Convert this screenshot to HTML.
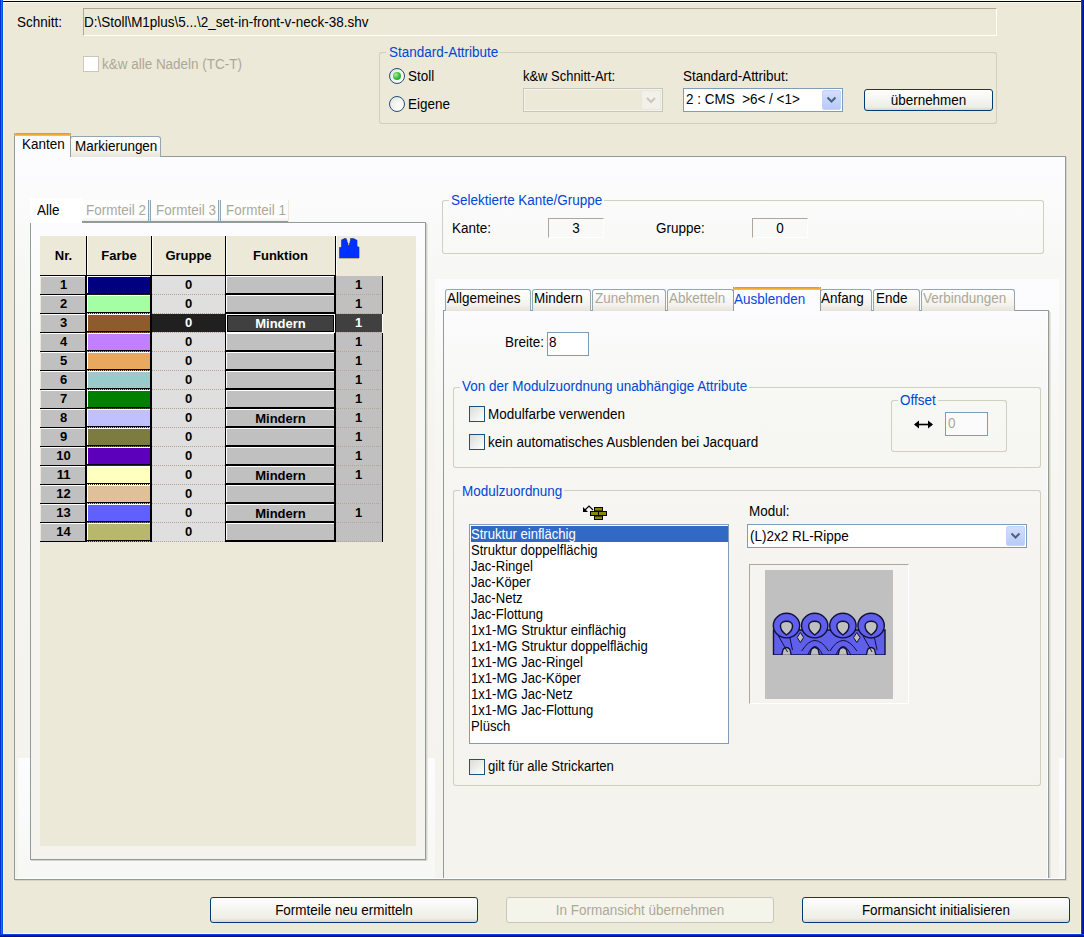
<!DOCTYPE html>
<html><head><meta charset="utf-8"><style>
html,body{margin:0;padding:0;}
body{width:1084px;height:937px;overflow:hidden;position:relative;background:#ece9d8;font-family:'Liberation Sans', sans-serif;font-size:13px;line-height:16px;}
body>div{position:absolute;white-space:pre;}
svg{display:block}
</style></head><body>
<div style="left:0px;top:0px;width:1084px;height:1px;background:#fbfaf0"></div>
<div style="left:0px;top:1px;width:1084px;height:1px;background:#000"></div>
<div style="left:0px;top:2px;width:1084px;height:1px;background:#fdf8e4"></div>
<div style="left:3px;top:2px;width:1px;height:932px;background:#fff6dc"></div>
<div style="left:1080px;top:2px;width:1px;height:932px;background:#fff6dc"></div>
<div style="left:3px;top:933px;width:1078px;height:1px;background:#fff6dc"></div>
<div style="left:0px;top:0px;width:1px;height:937px;background:#0530d0"></div>
<div style="left:1px;top:0px;width:1px;height:937px;background:#1a6ef0"></div>
<div style="left:2px;top:0px;width:1px;height:937px;background:#0050e0"></div>
<div style="left:1081px;top:0px;width:1px;height:937px;background:#0a40e8"></div>
<div style="left:1082px;top:0px;width:1px;height:937px;background:#0020a8"></div>
<div style="left:1083px;top:0px;width:1px;height:937px;background:#001590"></div>
<div style="left:0px;top:934px;width:1084px;height:1px;background:#0a40e8"></div>
<div style="left:0px;top:935px;width:1084px;height:1px;background:#0020a0"></div>
<div style="left:0px;top:936px;width:1084px;height:1px;background:#001088"></div>
<div style="left:17px;top:14px;font-size:14px;color:#000;font-weight:normal;transform:scaleX(0.962);transform-origin:0 0;">Schnitt:</div>
<div style="left:83px;top:8px;width:914px;height:28px;border-top:1px solid #aca899;border-left:1px solid #aca899;border-right:1px solid #fff;border-bottom:1px solid #fff;box-sizing:border-box"></div>
<div style="left:84px;top:14px;font-size:14px;color:#000;font-weight:normal;transform:scaleX(0.962);transform-origin:0 0;">D:\Stoll\M1plus\5...\2_set-in-front-v-neck-38.shv</div>
<div style="left:83px;top:56px;width:16px;height:16px;border:1px solid #cac8bb;background:#fff;box-sizing:border-box"></div>
<div style="left:102px;top:56px;font-size:14px;color:#aca899;font-weight:normal;transform:scaleX(0.962);transform-origin:0 0;">k&amp;w alle Nadeln (TC-T)</div>
<div style="left:379px;top:52px;width:7px;height:4px;border-top:1px solid #d0d0bf;border-left:1px solid #d0d0bf;border-top-left-radius:3px;box-sizing:border-box"></div>
<div style="left:500px;top:52px;width:497px;height:4px;border-top:1px solid #d0d0bf;border-right:1px solid #d0d0bf;border-top-right-radius:3px;box-sizing:border-box"></div>
<div style="left:379px;top:55px;width:618px;height:69px;border-left:1px solid #d0d0bf;border-right:1px solid #d0d0bf;border-bottom:1px solid #d0d0bf;border-bottom-left-radius:3px;border-bottom-right-radius:3px;box-sizing:border-box"></div>
<div style="left:389px;top:44px;font-size:14px;color:#0046d5;font-weight:normal;transform:scaleX(0.962);transform-origin:0 0;">Standard-Attribute</div>
<div style="left:389px;top:68px;width:16px;height:16px;border:1px solid #1c5180;border-radius:50%;box-sizing:border-box;background:radial-gradient(circle at 70% 70%, #fff 0%, #f0efe8 60%, #dcdad0 100%)"></div>
<div style="left:393px;top:72px;width:8px;height:8px;border-radius:50%;background:radial-gradient(circle at 35% 35%, #a6f0a0 0%, #3bbd3b 50%, #1e8f1e 100%)"></div>
<div style="left:408px;top:68px;font-size:14px;color:#000;font-weight:normal;transform:scaleX(0.962);transform-origin:0 0;">Stoll</div>
<div style="left:389px;top:96px;width:16px;height:16px;border:1px solid #1c5180;border-radius:50%;box-sizing:border-box;background:radial-gradient(circle at 70% 70%, #fff 0%, #f0efe8 60%, #dcdad0 100%)"></div>
<div style="left:408px;top:96px;font-size:14px;color:#000;font-weight:normal;transform:scaleX(0.962);transform-origin:0 0;">Eigene</div>
<div style="left:523px;top:68px;font-size:14px;color:#000;font-weight:normal;transform:scaleX(0.925);transform-origin:0 0;">k&amp;w Schnitt-Art:</div>
<div style="left:523px;top:88px;width:140px;height:24px;border:1px solid #c9c7ba;box-sizing:border-box;background:#ece9d8"></div>
<div style="left:524px;top:89px;width:138px;height:22px;border:1px solid #f5f4ea;box-sizing:border-box"></div>
<div style="left:641px;top:90px;width:20px;height:20px;background:#f2f1e9;border:1px solid #e8e6da;box-sizing:border-box;border-radius:2px"></div>
<svg style="position:absolute;left:646px;top:96px" width="10" height="8"><path d="M1 2 L5 6 L9 2" stroke="#c9c7ba" stroke-width="2" fill="none"/></svg>
<div style="left:683px;top:68px;font-size:14px;color:#000;font-weight:normal;transform:scaleX(0.962);transform-origin:0 0;">Standard-Attribut:</div>
<div style="left:683px;top:88px;width:160px;height:24px;border:1px solid #7f9db9;box-sizing:border-box;background:#fff"></div>
<div style="left:822px;top:90px;width:19px;height:20px;background:linear-gradient(#d2defc,#b8cbf6);border:1px solid #c3d3fd;box-sizing:border-box;border-radius:2px"></div>
<svg style="position:absolute;left:826px;top:96px" width="11" height="8"><path d="M1.5 1.5 L5.5 5.5 L9.5 1.5" stroke="#4d6185" stroke-width="2" fill="none"/></svg>
<div style="left:686px;top:91px;font-size:14px;color:#000;font-weight:normal;transform:scaleX(0.962);transform-origin:0 0;">2 : CMS &nbsp;&gt;6&lt; / &lt;1&gt;</div>
<div style="left:864px;top:89px;width:129px;height:22px;border:1px solid #003c74;border-radius:3px;box-sizing:border-box;background:linear-gradient(#ffffff 0%,#f6f6f2 40%,#eeede6 85%,#dcd6c8 100%)"></div>
<div style="left:864.0px;top:92px;width:129px;text-align:center;font-size:14px;color:#000;font-weight:normal;transform:scaleX(0.962);transform-origin:50% 0;">&uuml;bernehmen</div>
<div style="left:14px;top:156px;width:1052px;height:724px;border:1px solid #919b9c;box-sizing:border-box;background:linear-gradient(#fcfcfe 0px,#fbfbfc 40px,#f7f7f4 115px,#f5f4f0 300px,#f4f3ee 600px)"></div>
<div style="left:1066px;top:157px;width:1px;height:723px;background:#d6d3c6"></div>
<div style="left:15px;top:880px;width:1052px;height:1px;background:#d6d3c6"></div>
<div style="left:18px;top:758px;width:418px;height:121px;background:linear-gradient(#fcfcfe 0px,#fbfbfc 40px,#f7f7f4 115px,#f5f4f0 300px,#f4f3ee 600px)"></div>
<div style="left:1059px;top:758px;width:6px;height:121px;background:linear-gradient(#fcfcfe 0px,#fbfbfc 40px,#f7f7f4 115px,#f5f4f0 300px,#f4f3ee 600px)"></div>
<div style="left:70px;top:136px;width:91px;height:21px;border:1px solid #91a7b4;border-bottom:none;border-radius:3px 3px 0 0;box-sizing:border-box;background:linear-gradient(#fff,#f3f2ec 70%,#e6e4d9)"></div>
<div style="left:75px;top:138px;font-size:14px;color:#000;font-weight:normal;transform:scaleX(0.962);transform-origin:0 0;">Markierungen</div>
<div style="left:14px;top:133px;width:57px;height:24px;border-left:1px solid #919b9c;border-right:1px solid #919b9c;box-sizing:border-box;background:#fcfcfe"></div>
<div style="left:14px;top:133px;width:57px;height:3px;background:linear-gradient(#e68b2c,#ffc73c);border-radius:3px 3px 0 0"></div>
<div style="left:22px;top:136px;font-size:14px;color:#000;font-weight:normal;transform:scaleX(0.962);transform-origin:0 0;">Kanten</div>
<div style="left:30px;top:222px;width:396px;height:638px;border:1px solid #919b9c;box-sizing:border-box;background:linear-gradient(#fcfcfe 0px,#fbfbfc 40px,#f7f7f4 115px,#f5f4f0 300px,#f4f3ee 600px)"></div>
<div style="left:426px;top:223px;width:1px;height:637px;background:#d8d5c8"></div>
<div style="left:427px;top:224px;width:1px;height:636px;background:#e8e5da"></div>
<div style="left:31px;top:860px;width:396px;height:1px;background:#d6d3c6"></div>
<div style="left:30px;top:198px;width:52px;height:25px;background:#fff"></div>
<div style="left:37px;top:202px;font-size:14px;color:#000;font-weight:normal;transform:scaleX(0.962);transform-origin:0 0;">Alle</div>
<div style="left:82px;top:200px;width:207px;height:22px;background:linear-gradient(#fefefe 85%,#f0eee4);border-bottom:1px solid #919b9c;box-sizing:border-box"></div>
<div style="left:148px;top:200px;width:1px;height:21px;background:#8fa6b8"></div>
<div style="left:149px;top:200px;width:1px;height:21px;background:#f0ecd8"></div>
<div style="left:150px;top:200px;width:1px;height:21px;background:#8fa6b8"></div>
<div style="left:218px;top:200px;width:1px;height:21px;background:#8fa6b8"></div>
<div style="left:219px;top:200px;width:1px;height:21px;background:#f0ecd8"></div>
<div style="left:220px;top:200px;width:1px;height:21px;background:#8fa6b8"></div>
<div style="left:86px;top:202px;font-size:14px;color:#aca899;font-weight:normal;transform:scaleX(0.962);transform-origin:0 0;">Formteil 2</div>
<div style="left:156px;top:202px;font-size:14px;color:#aca899;font-weight:normal;transform:scaleX(0.962);transform-origin:0 0;">Formteil 3</div>
<div style="left:226px;top:202px;font-size:14px;color:#aca899;font-weight:normal;transform:scaleX(0.962);transform-origin:0 0;">Formteil 1</div>
<div style="left:288px;top:200px;width:1px;height:22px;background:#ece9d8"></div>
<div style="left:40px;top:236px;width:376px;height:610px;background:#ece9d8"></div>
<div style="left:86px;top:236px;width:1px;height:39px;background:#000"></div>
<div style="left:87px;top:236px;width:1px;height:39px;background:#fff"></div>
<div style="left:151px;top:236px;width:1px;height:39px;background:#000"></div>
<div style="left:152px;top:236px;width:1px;height:39px;background:#fff"></div>
<div style="left:225px;top:236px;width:1px;height:39px;background:#000"></div>
<div style="left:226px;top:236px;width:1px;height:39px;background:#fff"></div>
<div style="left:335px;top:236px;width:1px;height:39px;background:#000"></div>
<div style="left:336px;top:236px;width:1px;height:39px;background:#fff"></div>
<div style="left:40px;top:275px;width:296px;height:1px;background:#000"></div>
<div style="left:41.5px;top:248px;width:44px;text-align:center;font-size:13px;color:#000;font-weight:bold;transform-origin:50% 0;">Nr.</div>
<div style="left:89.0px;top:248px;width:60px;text-align:center;font-size:13px;color:#000;font-weight:bold;transform-origin:50% 0;">Farbe</div>
<div style="left:153.5px;top:248px;width:70px;text-align:center;font-size:13px;color:#000;font-weight:bold;transform-origin:50% 0;">Gruppe</div>
<div style="left:230.5px;top:248px;width:100px;text-align:center;font-size:13px;color:#000;font-weight:bold;transform-origin:50% 0;">Funktion</div>
<svg style="position:absolute;left:334px;top:234px" width="30" height="28" viewBox="334 234 30 28"><path d="M339 247 L341 247 L341 240 L343 239 L344 238 L346 238 L347 240 L348 243 L348 245 L349 245 L350 241 L350 238 L353 238 L355 239 L357 240 L357 246 L359 247 L359 258 L339 258 Z" fill="#0030ff" stroke="#8a7a50" stroke-width="0.5" shape-rendering="crispEdges"/></svg>
<div style="left:41px;top:276px;width:44px;height:1px;background:#fff"></div>
<div style="left:41px;top:277px;width:44px;height:17px;background:#c0c0c0"></div>
<div style="left:40px;top:294px;width:47px;height:1px;background:#000"></div>
<div style="left:85px;top:276px;width:2px;height:19px;background:#000"></div>
<div style="left:41.5px;top:277px;width:44px;text-align:center;font-size:13px;color:#000;font-weight:bold;transform-origin:50% 0;">1</div>
<div style="left:87px;top:276px;width:63px;height:18px;background:#fff"></div>
<div style="left:88px;top:277px;width:62px;height:16px;background:#000080"></div>
<div style="left:87px;top:293px;width:63px;height:1px;background:#000"></div>
<div style="left:87px;top:294px;width:63px;height:1px;background:repeating-linear-gradient(90deg,#000080 0 1px,#2a2010 1px 2px)"></div>
<div style="left:150px;top:276px;width:2px;height:19px;background:#000"></div>
<div style="left:152px;top:276px;width:73px;height:18px;background:#dfdfdf"></div>
<div style="left:152px;top:294px;width:73px;height:1px;background:repeating-linear-gradient(90deg,#b0a890 0 1px,#dfdfdf 1px 2px)"></div>
<div style="left:153.5px;top:277px;width:70px;text-align:center;font-size:13px;color:#000;font-weight:bold;transform-origin:50% 0;">0</div>
<div style="left:225px;top:276px;width:1px;height:19px;background:#000"></div>
<div style="left:226px;top:276px;width:109px;height:19px;background:#000"></div>
<div style="left:226px;top:276px;width:108px;height:17px;background:#fff"></div>
<div style="left:227px;top:277px;width:107px;height:16px;background:#c0c0c0"></div>
<div style="left:336px;top:276px;width:46px;height:18px;background:#c0c0c0"></div>
<div style="left:336px;top:294px;width:46px;height:1px;background:repeating-linear-gradient(90deg,#b0a890 0 1px,#c0c0c0 1px 2px)"></div>
<div style="left:338.5px;top:277px;width:40px;text-align:center;font-size:13px;color:#000;font-weight:bold;transform-origin:50% 0;">1</div>
<div style="left:41px;top:295px;width:44px;height:1px;background:#fff"></div>
<div style="left:41px;top:296px;width:44px;height:17px;background:#c0c0c0"></div>
<div style="left:40px;top:313px;width:47px;height:1px;background:#000"></div>
<div style="left:85px;top:295px;width:2px;height:19px;background:#000"></div>
<div style="left:41.5px;top:296px;width:44px;text-align:center;font-size:13px;color:#000;font-weight:bold;transform-origin:50% 0;">2</div>
<div style="left:87px;top:295px;width:63px;height:18px;background:#fff"></div>
<div style="left:88px;top:296px;width:62px;height:16px;background:#a4ffa4"></div>
<div style="left:87px;top:312px;width:63px;height:1px;background:#000"></div>
<div style="left:87px;top:313px;width:63px;height:1px;background:repeating-linear-gradient(90deg,#a4ffa4 0 1px,#2a2010 1px 2px)"></div>
<div style="left:150px;top:295px;width:2px;height:19px;background:#000"></div>
<div style="left:152px;top:295px;width:73px;height:18px;background:#dfdfdf"></div>
<div style="left:152px;top:313px;width:73px;height:1px;background:repeating-linear-gradient(90deg,#b0a890 0 1px,#dfdfdf 1px 2px)"></div>
<div style="left:153.5px;top:296px;width:70px;text-align:center;font-size:13px;color:#000;font-weight:bold;transform-origin:50% 0;">0</div>
<div style="left:225px;top:295px;width:1px;height:19px;background:#000"></div>
<div style="left:226px;top:295px;width:109px;height:19px;background:#000"></div>
<div style="left:226px;top:295px;width:108px;height:17px;background:#fff"></div>
<div style="left:227px;top:296px;width:107px;height:16px;background:#c0c0c0"></div>
<div style="left:336px;top:295px;width:46px;height:18px;background:#c0c0c0"></div>
<div style="left:336px;top:313px;width:46px;height:1px;background:repeating-linear-gradient(90deg,#b0a890 0 1px,#c0c0c0 1px 2px)"></div>
<div style="left:338.5px;top:296px;width:40px;text-align:center;font-size:13px;color:#000;font-weight:bold;transform-origin:50% 0;">1</div>
<div style="left:41px;top:314px;width:44px;height:1px;background:#fff"></div>
<div style="left:41px;top:315px;width:44px;height:17px;background:#c0c0c0"></div>
<div style="left:40px;top:332px;width:47px;height:1px;background:#000"></div>
<div style="left:85px;top:314px;width:2px;height:19px;background:#000"></div>
<div style="left:41.5px;top:315px;width:44px;text-align:center;font-size:13px;color:#000;font-weight:bold;transform-origin:50% 0;">3</div>
<div style="left:87px;top:314px;width:63px;height:18px;background:#fff"></div>
<div style="left:88px;top:315px;width:62px;height:16px;background:#8c5c2c"></div>
<div style="left:87px;top:331px;width:63px;height:1px;background:#000"></div>
<div style="left:87px;top:332px;width:63px;height:1px;background:repeating-linear-gradient(90deg,#8c5c2c 0 1px,#2a2010 1px 2px)"></div>
<div style="left:150px;top:314px;width:2px;height:19px;background:#000"></div>
<div style="left:152px;top:314px;width:73px;height:18px;background:#202020"></div>
<div style="left:152px;top:332px;width:73px;height:1px;background:repeating-linear-gradient(90deg,#b0a890 0 1px,#dfdfdf 1px 2px)"></div>
<div style="left:153.5px;top:315px;width:70px;text-align:center;font-size:13px;color:#fff;font-weight:bold;transform-origin:50% 0;">0</div>
<div style="left:225px;top:314px;width:1px;height:19px;background:#000"></div>
<div style="left:226px;top:314px;width:109px;height:19px;background:#fff"></div>
<div style="left:227px;top:315px;width:107px;height:17px;background:#000"></div>
<div style="left:228px;top:316px;width:105px;height:15px;background:#404040"></div>
<div style="left:230.5px;top:316px;width:100px;text-align:center;font-size:13px;color:#fff;font-weight:bold;transform-origin:50% 0;">Mindern</div>
<div style="left:336px;top:314px;width:46px;height:18px;background:#404040"></div>
<div style="left:336px;top:332px;width:46px;height:1px;background:repeating-linear-gradient(90deg,#b0a890 0 1px,#c0c0c0 1px 2px)"></div>
<div style="left:338.5px;top:315px;width:40px;text-align:center;font-size:13px;color:#fff;font-weight:bold;transform-origin:50% 0;">1</div>
<div style="left:41px;top:333px;width:44px;height:1px;background:#fff"></div>
<div style="left:41px;top:334px;width:44px;height:17px;background:#c0c0c0"></div>
<div style="left:40px;top:351px;width:47px;height:1px;background:#000"></div>
<div style="left:85px;top:333px;width:2px;height:19px;background:#000"></div>
<div style="left:41.5px;top:334px;width:44px;text-align:center;font-size:13px;color:#000;font-weight:bold;transform-origin:50% 0;">4</div>
<div style="left:87px;top:333px;width:63px;height:18px;background:#fff"></div>
<div style="left:88px;top:334px;width:62px;height:16px;background:#c080ff"></div>
<div style="left:87px;top:350px;width:63px;height:1px;background:#000"></div>
<div style="left:87px;top:351px;width:63px;height:1px;background:repeating-linear-gradient(90deg,#c080ff 0 1px,#2a2010 1px 2px)"></div>
<div style="left:150px;top:333px;width:2px;height:19px;background:#000"></div>
<div style="left:152px;top:333px;width:73px;height:18px;background:#dfdfdf"></div>
<div style="left:152px;top:351px;width:73px;height:1px;background:repeating-linear-gradient(90deg,#b0a890 0 1px,#dfdfdf 1px 2px)"></div>
<div style="left:153.5px;top:334px;width:70px;text-align:center;font-size:13px;color:#000;font-weight:bold;transform-origin:50% 0;">0</div>
<div style="left:225px;top:333px;width:1px;height:19px;background:#000"></div>
<div style="left:226px;top:333px;width:109px;height:19px;background:#000"></div>
<div style="left:226px;top:333px;width:108px;height:17px;background:#fff"></div>
<div style="left:227px;top:334px;width:107px;height:16px;background:#c0c0c0"></div>
<div style="left:336px;top:333px;width:46px;height:18px;background:#c0c0c0"></div>
<div style="left:336px;top:351px;width:46px;height:1px;background:repeating-linear-gradient(90deg,#b0a890 0 1px,#c0c0c0 1px 2px)"></div>
<div style="left:338.5px;top:334px;width:40px;text-align:center;font-size:13px;color:#000;font-weight:bold;transform-origin:50% 0;">1</div>
<div style="left:41px;top:352px;width:44px;height:1px;background:#fff"></div>
<div style="left:41px;top:353px;width:44px;height:17px;background:#c0c0c0"></div>
<div style="left:40px;top:370px;width:47px;height:1px;background:#000"></div>
<div style="left:85px;top:352px;width:2px;height:19px;background:#000"></div>
<div style="left:41.5px;top:353px;width:44px;text-align:center;font-size:13px;color:#000;font-weight:bold;transform-origin:50% 0;">5</div>
<div style="left:87px;top:352px;width:63px;height:18px;background:#fff"></div>
<div style="left:88px;top:353px;width:62px;height:16px;background:#e8a860"></div>
<div style="left:87px;top:369px;width:63px;height:1px;background:#000"></div>
<div style="left:87px;top:370px;width:63px;height:1px;background:repeating-linear-gradient(90deg,#e8a860 0 1px,#2a2010 1px 2px)"></div>
<div style="left:150px;top:352px;width:2px;height:19px;background:#000"></div>
<div style="left:152px;top:352px;width:73px;height:18px;background:#dfdfdf"></div>
<div style="left:152px;top:370px;width:73px;height:1px;background:repeating-linear-gradient(90deg,#b0a890 0 1px,#dfdfdf 1px 2px)"></div>
<div style="left:153.5px;top:353px;width:70px;text-align:center;font-size:13px;color:#000;font-weight:bold;transform-origin:50% 0;">0</div>
<div style="left:225px;top:352px;width:1px;height:19px;background:#000"></div>
<div style="left:226px;top:352px;width:109px;height:19px;background:#000"></div>
<div style="left:226px;top:352px;width:108px;height:17px;background:#fff"></div>
<div style="left:227px;top:353px;width:107px;height:16px;background:#c0c0c0"></div>
<div style="left:336px;top:352px;width:46px;height:18px;background:#c0c0c0"></div>
<div style="left:336px;top:370px;width:46px;height:1px;background:repeating-linear-gradient(90deg,#b0a890 0 1px,#c0c0c0 1px 2px)"></div>
<div style="left:338.5px;top:353px;width:40px;text-align:center;font-size:13px;color:#000;font-weight:bold;transform-origin:50% 0;">1</div>
<div style="left:41px;top:371px;width:44px;height:1px;background:#fff"></div>
<div style="left:41px;top:372px;width:44px;height:17px;background:#c0c0c0"></div>
<div style="left:40px;top:389px;width:47px;height:1px;background:#000"></div>
<div style="left:85px;top:371px;width:2px;height:19px;background:#000"></div>
<div style="left:41.5px;top:372px;width:44px;text-align:center;font-size:13px;color:#000;font-weight:bold;transform-origin:50% 0;">6</div>
<div style="left:87px;top:371px;width:63px;height:18px;background:#fff"></div>
<div style="left:88px;top:372px;width:62px;height:16px;background:#98cccc"></div>
<div style="left:87px;top:388px;width:63px;height:1px;background:#000"></div>
<div style="left:87px;top:389px;width:63px;height:1px;background:repeating-linear-gradient(90deg,#98cccc 0 1px,#2a2010 1px 2px)"></div>
<div style="left:150px;top:371px;width:2px;height:19px;background:#000"></div>
<div style="left:152px;top:371px;width:73px;height:18px;background:#dfdfdf"></div>
<div style="left:152px;top:389px;width:73px;height:1px;background:repeating-linear-gradient(90deg,#b0a890 0 1px,#dfdfdf 1px 2px)"></div>
<div style="left:153.5px;top:372px;width:70px;text-align:center;font-size:13px;color:#000;font-weight:bold;transform-origin:50% 0;">0</div>
<div style="left:225px;top:371px;width:1px;height:19px;background:#000"></div>
<div style="left:226px;top:371px;width:109px;height:19px;background:#000"></div>
<div style="left:226px;top:371px;width:108px;height:17px;background:#fff"></div>
<div style="left:227px;top:372px;width:107px;height:16px;background:#c0c0c0"></div>
<div style="left:336px;top:371px;width:46px;height:18px;background:#c0c0c0"></div>
<div style="left:336px;top:389px;width:46px;height:1px;background:repeating-linear-gradient(90deg,#b0a890 0 1px,#c0c0c0 1px 2px)"></div>
<div style="left:338.5px;top:372px;width:40px;text-align:center;font-size:13px;color:#000;font-weight:bold;transform-origin:50% 0;">1</div>
<div style="left:41px;top:390px;width:44px;height:1px;background:#fff"></div>
<div style="left:41px;top:391px;width:44px;height:17px;background:#c0c0c0"></div>
<div style="left:40px;top:408px;width:47px;height:1px;background:#000"></div>
<div style="left:85px;top:390px;width:2px;height:19px;background:#000"></div>
<div style="left:41.5px;top:391px;width:44px;text-align:center;font-size:13px;color:#000;font-weight:bold;transform-origin:50% 0;">7</div>
<div style="left:87px;top:390px;width:63px;height:18px;background:#fff"></div>
<div style="left:88px;top:391px;width:62px;height:16px;background:#008000"></div>
<div style="left:87px;top:407px;width:63px;height:1px;background:#000"></div>
<div style="left:87px;top:408px;width:63px;height:1px;background:repeating-linear-gradient(90deg,#008000 0 1px,#2a2010 1px 2px)"></div>
<div style="left:150px;top:390px;width:2px;height:19px;background:#000"></div>
<div style="left:152px;top:390px;width:73px;height:18px;background:#dfdfdf"></div>
<div style="left:152px;top:408px;width:73px;height:1px;background:repeating-linear-gradient(90deg,#b0a890 0 1px,#dfdfdf 1px 2px)"></div>
<div style="left:153.5px;top:391px;width:70px;text-align:center;font-size:13px;color:#000;font-weight:bold;transform-origin:50% 0;">0</div>
<div style="left:225px;top:390px;width:1px;height:19px;background:#000"></div>
<div style="left:226px;top:390px;width:109px;height:19px;background:#000"></div>
<div style="left:226px;top:390px;width:108px;height:17px;background:#fff"></div>
<div style="left:227px;top:391px;width:107px;height:16px;background:#c0c0c0"></div>
<div style="left:336px;top:390px;width:46px;height:18px;background:#c0c0c0"></div>
<div style="left:336px;top:408px;width:46px;height:1px;background:repeating-linear-gradient(90deg,#b0a890 0 1px,#c0c0c0 1px 2px)"></div>
<div style="left:338.5px;top:391px;width:40px;text-align:center;font-size:13px;color:#000;font-weight:bold;transform-origin:50% 0;">1</div>
<div style="left:41px;top:409px;width:44px;height:1px;background:#fff"></div>
<div style="left:41px;top:410px;width:44px;height:17px;background:#c0c0c0"></div>
<div style="left:40px;top:427px;width:47px;height:1px;background:#000"></div>
<div style="left:85px;top:409px;width:2px;height:19px;background:#000"></div>
<div style="left:41.5px;top:410px;width:44px;text-align:center;font-size:13px;color:#000;font-weight:bold;transform-origin:50% 0;">8</div>
<div style="left:87px;top:409px;width:63px;height:18px;background:#fff"></div>
<div style="left:88px;top:410px;width:62px;height:16px;background:#c0c0ff"></div>
<div style="left:87px;top:426px;width:63px;height:1px;background:#000"></div>
<div style="left:87px;top:427px;width:63px;height:1px;background:repeating-linear-gradient(90deg,#c0c0ff 0 1px,#2a2010 1px 2px)"></div>
<div style="left:150px;top:409px;width:2px;height:19px;background:#000"></div>
<div style="left:152px;top:409px;width:73px;height:18px;background:#dfdfdf"></div>
<div style="left:152px;top:427px;width:73px;height:1px;background:repeating-linear-gradient(90deg,#b0a890 0 1px,#dfdfdf 1px 2px)"></div>
<div style="left:153.5px;top:410px;width:70px;text-align:center;font-size:13px;color:#000;font-weight:bold;transform-origin:50% 0;">0</div>
<div style="left:225px;top:409px;width:1px;height:19px;background:#000"></div>
<div style="left:226px;top:409px;width:109px;height:19px;background:#000"></div>
<div style="left:226px;top:409px;width:108px;height:17px;background:#fff"></div>
<div style="left:227px;top:410px;width:107px;height:16px;background:#c0c0c0"></div>
<div style="left:230.5px;top:411px;width:100px;text-align:center;font-size:13px;color:#000;font-weight:bold;transform-origin:50% 0;">Mindern</div>
<div style="left:336px;top:409px;width:46px;height:18px;background:#c0c0c0"></div>
<div style="left:336px;top:427px;width:46px;height:1px;background:repeating-linear-gradient(90deg,#b0a890 0 1px,#c0c0c0 1px 2px)"></div>
<div style="left:338.5px;top:410px;width:40px;text-align:center;font-size:13px;color:#000;font-weight:bold;transform-origin:50% 0;">1</div>
<div style="left:41px;top:428px;width:44px;height:1px;background:#fff"></div>
<div style="left:41px;top:429px;width:44px;height:17px;background:#c0c0c0"></div>
<div style="left:40px;top:446px;width:47px;height:1px;background:#000"></div>
<div style="left:85px;top:428px;width:2px;height:19px;background:#000"></div>
<div style="left:41.5px;top:429px;width:44px;text-align:center;font-size:13px;color:#000;font-weight:bold;transform-origin:50% 0;">9</div>
<div style="left:87px;top:428px;width:63px;height:18px;background:#fff"></div>
<div style="left:88px;top:429px;width:62px;height:16px;background:#7c7c40"></div>
<div style="left:87px;top:445px;width:63px;height:1px;background:#000"></div>
<div style="left:87px;top:446px;width:63px;height:1px;background:repeating-linear-gradient(90deg,#7c7c40 0 1px,#2a2010 1px 2px)"></div>
<div style="left:150px;top:428px;width:2px;height:19px;background:#000"></div>
<div style="left:152px;top:428px;width:73px;height:18px;background:#dfdfdf"></div>
<div style="left:152px;top:446px;width:73px;height:1px;background:repeating-linear-gradient(90deg,#b0a890 0 1px,#dfdfdf 1px 2px)"></div>
<div style="left:153.5px;top:429px;width:70px;text-align:center;font-size:13px;color:#000;font-weight:bold;transform-origin:50% 0;">0</div>
<div style="left:225px;top:428px;width:1px;height:19px;background:#000"></div>
<div style="left:226px;top:428px;width:109px;height:19px;background:#000"></div>
<div style="left:226px;top:428px;width:108px;height:17px;background:#fff"></div>
<div style="left:227px;top:429px;width:107px;height:16px;background:#c0c0c0"></div>
<div style="left:336px;top:428px;width:46px;height:18px;background:#c0c0c0"></div>
<div style="left:336px;top:446px;width:46px;height:1px;background:repeating-linear-gradient(90deg,#b0a890 0 1px,#c0c0c0 1px 2px)"></div>
<div style="left:338.5px;top:429px;width:40px;text-align:center;font-size:13px;color:#000;font-weight:bold;transform-origin:50% 0;">1</div>
<div style="left:41px;top:447px;width:44px;height:1px;background:#fff"></div>
<div style="left:41px;top:448px;width:44px;height:17px;background:#c0c0c0"></div>
<div style="left:40px;top:465px;width:47px;height:1px;background:#000"></div>
<div style="left:85px;top:447px;width:2px;height:19px;background:#000"></div>
<div style="left:41.5px;top:448px;width:44px;text-align:center;font-size:13px;color:#000;font-weight:bold;transform-origin:50% 0;">10</div>
<div style="left:87px;top:447px;width:63px;height:18px;background:#fff"></div>
<div style="left:88px;top:448px;width:62px;height:16px;background:#5c00bc"></div>
<div style="left:87px;top:464px;width:63px;height:1px;background:#000"></div>
<div style="left:87px;top:465px;width:63px;height:1px;background:repeating-linear-gradient(90deg,#5c00bc 0 1px,#2a2010 1px 2px)"></div>
<div style="left:150px;top:447px;width:2px;height:19px;background:#000"></div>
<div style="left:152px;top:447px;width:73px;height:18px;background:#dfdfdf"></div>
<div style="left:152px;top:465px;width:73px;height:1px;background:repeating-linear-gradient(90deg,#b0a890 0 1px,#dfdfdf 1px 2px)"></div>
<div style="left:153.5px;top:448px;width:70px;text-align:center;font-size:13px;color:#000;font-weight:bold;transform-origin:50% 0;">0</div>
<div style="left:225px;top:447px;width:1px;height:19px;background:#000"></div>
<div style="left:226px;top:447px;width:109px;height:19px;background:#000"></div>
<div style="left:226px;top:447px;width:108px;height:17px;background:#fff"></div>
<div style="left:227px;top:448px;width:107px;height:16px;background:#c0c0c0"></div>
<div style="left:336px;top:447px;width:46px;height:18px;background:#c0c0c0"></div>
<div style="left:336px;top:465px;width:46px;height:1px;background:repeating-linear-gradient(90deg,#b0a890 0 1px,#c0c0c0 1px 2px)"></div>
<div style="left:338.5px;top:448px;width:40px;text-align:center;font-size:13px;color:#000;font-weight:bold;transform-origin:50% 0;">1</div>
<div style="left:41px;top:466px;width:44px;height:1px;background:#fff"></div>
<div style="left:41px;top:467px;width:44px;height:17px;background:#c0c0c0"></div>
<div style="left:40px;top:484px;width:47px;height:1px;background:#000"></div>
<div style="left:85px;top:466px;width:2px;height:19px;background:#000"></div>
<div style="left:41.5px;top:467px;width:44px;text-align:center;font-size:13px;color:#000;font-weight:bold;transform-origin:50% 0;">11</div>
<div style="left:87px;top:466px;width:63px;height:18px;background:#fff"></div>
<div style="left:88px;top:467px;width:62px;height:16px;background:#ffffc0"></div>
<div style="left:87px;top:483px;width:63px;height:1px;background:#000"></div>
<div style="left:87px;top:484px;width:63px;height:1px;background:repeating-linear-gradient(90deg,#ffffc0 0 1px,#2a2010 1px 2px)"></div>
<div style="left:150px;top:466px;width:2px;height:19px;background:#000"></div>
<div style="left:152px;top:466px;width:73px;height:18px;background:#dfdfdf"></div>
<div style="left:152px;top:484px;width:73px;height:1px;background:repeating-linear-gradient(90deg,#b0a890 0 1px,#dfdfdf 1px 2px)"></div>
<div style="left:153.5px;top:467px;width:70px;text-align:center;font-size:13px;color:#000;font-weight:bold;transform-origin:50% 0;">0</div>
<div style="left:225px;top:466px;width:1px;height:19px;background:#000"></div>
<div style="left:226px;top:466px;width:109px;height:19px;background:#000"></div>
<div style="left:226px;top:466px;width:108px;height:17px;background:#fff"></div>
<div style="left:227px;top:467px;width:107px;height:16px;background:#c0c0c0"></div>
<div style="left:230.5px;top:468px;width:100px;text-align:center;font-size:13px;color:#000;font-weight:bold;transform-origin:50% 0;">Mindern</div>
<div style="left:336px;top:466px;width:46px;height:18px;background:#c0c0c0"></div>
<div style="left:336px;top:484px;width:46px;height:1px;background:repeating-linear-gradient(90deg,#b0a890 0 1px,#c0c0c0 1px 2px)"></div>
<div style="left:338.5px;top:467px;width:40px;text-align:center;font-size:13px;color:#000;font-weight:bold;transform-origin:50% 0;">1</div>
<div style="left:41px;top:485px;width:44px;height:1px;background:#fff"></div>
<div style="left:41px;top:486px;width:44px;height:17px;background:#c0c0c0"></div>
<div style="left:40px;top:503px;width:47px;height:1px;background:#000"></div>
<div style="left:85px;top:485px;width:2px;height:19px;background:#000"></div>
<div style="left:41.5px;top:486px;width:44px;text-align:center;font-size:13px;color:#000;font-weight:bold;transform-origin:50% 0;">12</div>
<div style="left:87px;top:485px;width:63px;height:18px;background:#fff"></div>
<div style="left:88px;top:486px;width:62px;height:16px;background:#e0c098"></div>
<div style="left:87px;top:502px;width:63px;height:1px;background:#000"></div>
<div style="left:87px;top:503px;width:63px;height:1px;background:repeating-linear-gradient(90deg,#e0c098 0 1px,#2a2010 1px 2px)"></div>
<div style="left:150px;top:485px;width:2px;height:19px;background:#000"></div>
<div style="left:152px;top:485px;width:73px;height:18px;background:#dfdfdf"></div>
<div style="left:152px;top:503px;width:73px;height:1px;background:repeating-linear-gradient(90deg,#b0a890 0 1px,#dfdfdf 1px 2px)"></div>
<div style="left:153.5px;top:486px;width:70px;text-align:center;font-size:13px;color:#000;font-weight:bold;transform-origin:50% 0;">0</div>
<div style="left:225px;top:485px;width:1px;height:19px;background:#000"></div>
<div style="left:226px;top:485px;width:109px;height:19px;background:#000"></div>
<div style="left:226px;top:485px;width:108px;height:17px;background:#fff"></div>
<div style="left:227px;top:486px;width:107px;height:16px;background:#c0c0c0"></div>
<div style="left:336px;top:485px;width:46px;height:18px;background:#c0c0c0"></div>
<div style="left:336px;top:503px;width:46px;height:1px;background:repeating-linear-gradient(90deg,#b0a890 0 1px,#c0c0c0 1px 2px)"></div>
<div style="left:41px;top:504px;width:44px;height:1px;background:#fff"></div>
<div style="left:41px;top:505px;width:44px;height:17px;background:#c0c0c0"></div>
<div style="left:40px;top:522px;width:47px;height:1px;background:#000"></div>
<div style="left:85px;top:504px;width:2px;height:19px;background:#000"></div>
<div style="left:41.5px;top:505px;width:44px;text-align:center;font-size:13px;color:#000;font-weight:bold;transform-origin:50% 0;">13</div>
<div style="left:87px;top:504px;width:63px;height:18px;background:#fff"></div>
<div style="left:88px;top:505px;width:62px;height:16px;background:#6060ff"></div>
<div style="left:87px;top:521px;width:63px;height:1px;background:#000"></div>
<div style="left:87px;top:522px;width:63px;height:1px;background:repeating-linear-gradient(90deg,#6060ff 0 1px,#2a2010 1px 2px)"></div>
<div style="left:150px;top:504px;width:2px;height:19px;background:#000"></div>
<div style="left:152px;top:504px;width:73px;height:18px;background:#dfdfdf"></div>
<div style="left:152px;top:522px;width:73px;height:1px;background:repeating-linear-gradient(90deg,#b0a890 0 1px,#dfdfdf 1px 2px)"></div>
<div style="left:153.5px;top:505px;width:70px;text-align:center;font-size:13px;color:#000;font-weight:bold;transform-origin:50% 0;">0</div>
<div style="left:225px;top:504px;width:1px;height:19px;background:#000"></div>
<div style="left:226px;top:504px;width:109px;height:19px;background:#000"></div>
<div style="left:226px;top:504px;width:108px;height:17px;background:#fff"></div>
<div style="left:227px;top:505px;width:107px;height:16px;background:#c0c0c0"></div>
<div style="left:230.5px;top:506px;width:100px;text-align:center;font-size:13px;color:#000;font-weight:bold;transform-origin:50% 0;">Mindern</div>
<div style="left:336px;top:504px;width:46px;height:18px;background:#c0c0c0"></div>
<div style="left:336px;top:522px;width:46px;height:1px;background:repeating-linear-gradient(90deg,#b0a890 0 1px,#c0c0c0 1px 2px)"></div>
<div style="left:338.5px;top:505px;width:40px;text-align:center;font-size:13px;color:#000;font-weight:bold;transform-origin:50% 0;">1</div>
<div style="left:41px;top:523px;width:44px;height:1px;background:#fff"></div>
<div style="left:41px;top:524px;width:44px;height:17px;background:#c0c0c0"></div>
<div style="left:40px;top:541px;width:47px;height:1px;background:#000"></div>
<div style="left:85px;top:523px;width:2px;height:19px;background:#000"></div>
<div style="left:41.5px;top:524px;width:44px;text-align:center;font-size:13px;color:#000;font-weight:bold;transform-origin:50% 0;">14</div>
<div style="left:87px;top:523px;width:63px;height:18px;background:#fff"></div>
<div style="left:88px;top:524px;width:62px;height:16px;background:#b8b86c"></div>
<div style="left:87px;top:540px;width:63px;height:1px;background:#000"></div>
<div style="left:87px;top:541px;width:63px;height:1px;background:repeating-linear-gradient(90deg,#b8b86c 0 1px,#2a2010 1px 2px)"></div>
<div style="left:150px;top:523px;width:2px;height:19px;background:#000"></div>
<div style="left:152px;top:523px;width:73px;height:18px;background:#dfdfdf"></div>
<div style="left:152px;top:541px;width:73px;height:1px;background:repeating-linear-gradient(90deg,#b0a890 0 1px,#dfdfdf 1px 2px)"></div>
<div style="left:153.5px;top:524px;width:70px;text-align:center;font-size:13px;color:#000;font-weight:bold;transform-origin:50% 0;">0</div>
<div style="left:225px;top:523px;width:1px;height:19px;background:#000"></div>
<div style="left:226px;top:523px;width:109px;height:19px;background:#000"></div>
<div style="left:226px;top:523px;width:108px;height:17px;background:#fff"></div>
<div style="left:227px;top:524px;width:107px;height:16px;background:#c0c0c0"></div>
<div style="left:336px;top:523px;width:46px;height:18px;background:#c0c0c0"></div>
<div style="left:336px;top:541px;width:46px;height:1px;background:repeating-linear-gradient(90deg,#b0a890 0 1px,#c0c0c0 1px 2px)"></div>
<div style="left:335px;top:236px;width:1px;height:306px;background:#000"></div>
<div style="left:382px;top:276px;width:1px;height:266px;background:#000"></div>
<div style="left:382px;top:314px;width:1px;height:19px;background:#fff"></div>
<div style="left:442px;top:200px;width:7px;height:4px;border-top:1px solid #d0d0bf;border-left:1px solid #d0d0bf;border-top-left-radius:3px;box-sizing:border-box"></div>
<div style="left:604px;top:200px;width:440px;height:4px;border-top:1px solid #d0d0bf;border-right:1px solid #d0d0bf;border-top-right-radius:3px;box-sizing:border-box"></div>
<div style="left:442px;top:203px;width:602px;height:51px;border-left:1px solid #d0d0bf;border-right:1px solid #d0d0bf;border-bottom:1px solid #d0d0bf;border-bottom-left-radius:3px;border-bottom-right-radius:3px;box-sizing:border-box"></div>
<div style="left:451px;top:192px;font-size:14px;color:#0046d5;font-weight:normal;transform:scaleX(0.962);transform-origin:0 0;">Selektierte Kante/Gruppe</div>
<div style="left:452px;top:220px;font-size:14px;color:#000;font-weight:normal;transform:scaleX(0.962);transform-origin:0 0;">Kante:</div>
<div style="left:548px;top:218px;width:56px;height:20px;border-top:1px solid #aca899;border-left:1px solid #aca899;border-right:1px solid #fff;border-bottom:1px solid #fff;box-sizing:border-box"></div>
<div style="left:550.5px;top:220px;width:50px;text-align:center;font-size:14px;color:#000;font-weight:normal;transform:scaleX(0.962);transform-origin:50% 0;">3</div>
<div style="left:656px;top:220px;font-size:14px;color:#000;font-weight:normal;transform:scaleX(0.962);transform-origin:0 0;">Gruppe:</div>
<div style="left:752px;top:218px;width:56px;height:20px;border-top:1px solid #aca899;border-left:1px solid #aca899;border-right:1px solid #fff;border-bottom:1px solid #fff;box-sizing:border-box"></div>
<div style="left:754.5px;top:220px;width:50px;text-align:center;font-size:14px;color:#000;font-weight:normal;transform:scaleX(0.962);transform-origin:50% 0;">0</div>
<div style="left:435px;top:279px;width:624px;height:600px;background:linear-gradient(#fcfcfe 0px,#fbfbfc 40px,#f7f7f4 115px,#f5f4f0 300px,#f4f3ee 600px)"></div>
<div style="left:443px;top:310px;width:606px;height:568px;border:1px solid #919b9c;border-bottom:none;box-sizing:border-box;background:linear-gradient(#fcfcfe 0px,#fbfbfc 9px,#f7f7f4 84px,#f5f4f0 269px,#f4f3ee 569px)"></div>
<div style="left:1049px;top:311px;width:1px;height:567px;background:#d8d5c8"></div>
<div style="left:1050px;top:312px;width:1px;height:566px;background:#e8e5da"></div>
<div style="left:1047px;top:311px;width:1px;height:567px;background:#fdfdfd"></div>
<div style="left:15px;top:878px;width:1050px;height:1px;background:#fdfdfd"></div>
<div style="left:1064px;top:157px;width:1px;height:721px;background:#fdfdfd"></div>
<div style="left:445px;top:289px;width:86px;height:22px;border:1px solid #91a7b4;border-bottom:none;border-radius:3px 3px 0 0;box-sizing:border-box;background:linear-gradient(#fff,#f3f2ec 70%,#e6e4d9)"></div>
<div style="left:447px;top:290px;font-size:14px;color:#000;font-weight:normal;transform:scaleX(0.962);transform-origin:0 0;">Allgemeines</div>
<div style="left:532px;top:289px;width:59px;height:22px;border:1px solid #91a7b4;border-bottom:none;border-radius:3px 3px 0 0;box-sizing:border-box;background:linear-gradient(#fff,#f3f2ec 70%,#e6e4d9)"></div>
<div style="left:534px;top:290px;font-size:14px;color:#000;font-weight:normal;transform:scaleX(0.962);transform-origin:0 0;">Mindern</div>
<div style="left:592px;top:289px;width:74px;height:22px;border:1px solid #91a7b4;border-bottom:none;border-radius:3px 3px 0 0;box-sizing:border-box;background:linear-gradient(#fff,#f3f2ec 70%,#e6e4d9)"></div>
<div style="left:595px;top:290px;font-size:14px;color:#aca899;font-weight:normal;transform:scaleX(0.962);transform-origin:0 0;">Zunehmen</div>
<div style="left:667px;top:289px;width:67px;height:22px;border:1px solid #91a7b4;border-bottom:none;border-radius:3px 3px 0 0;box-sizing:border-box;background:linear-gradient(#fff,#f3f2ec 70%,#e6e4d9)"></div>
<div style="left:669px;top:290px;font-size:14px;color:#aca899;font-weight:normal;transform:scaleX(0.962);transform-origin:0 0;">Abketteln</div>
<div style="left:820px;top:289px;width:52px;height:22px;border:1px solid #91a7b4;border-bottom:none;border-radius:3px 3px 0 0;box-sizing:border-box;background:linear-gradient(#fff,#f3f2ec 70%,#e6e4d9)"></div>
<div style="left:821px;top:290px;font-size:14px;color:#000;font-weight:normal;transform:scaleX(0.962);transform-origin:0 0;">Anfang</div>
<div style="left:873px;top:289px;width:47px;height:22px;border:1px solid #91a7b4;border-bottom:none;border-radius:3px 3px 0 0;box-sizing:border-box;background:linear-gradient(#fff,#f3f2ec 70%,#e6e4d9)"></div>
<div style="left:876px;top:290px;font-size:14px;color:#000;font-weight:normal;transform:scaleX(0.962);transform-origin:0 0;">Ende</div>
<div style="left:921px;top:289px;width:94px;height:22px;border:1px solid #91a7b4;border-bottom:none;border-radius:3px 3px 0 0;box-sizing:border-box;background:linear-gradient(#fff,#f3f2ec 70%,#e6e4d9)"></div>
<div style="left:923px;top:290px;font-size:14px;color:#aca899;font-weight:normal;transform:scaleX(0.962);transform-origin:0 0;">Verbindungen</div>
<div style="left:733px;top:287px;width:88px;height:24px;border-left:1px solid #919b9c;border-right:1px solid #919b9c;box-sizing:border-box;background:#fcfcfe"></div>
<div style="left:733px;top:287px;width:88px;height:3px;background:linear-gradient(#e68b2c,#ffc73c);border-radius:3px 3px 0 0"></div>
<div style="left:734px;top:291px;font-size:14px;color:#0a46e0;font-weight:normal;transform:scaleX(0.962);transform-origin:0 0;">Ausblenden</div>
<div style="left:505px;top:334px;font-size:14px;color:#000;font-weight:normal;transform:scaleX(0.962);transform-origin:0 0;">Breite:</div>
<div style="left:547px;top:332px;width:42px;height:24px;border:1px solid #7f9db9;box-sizing:border-box;background:#fff"></div>
<div style="left:549px;top:334px;font-size:14px;color:#000;font-weight:normal;transform:scaleX(0.962);transform-origin:0 0;">8</div>
<div style="left:453px;top:387px;width:7px;height:4px;border-top:1px solid #d0d0bf;border-left:1px solid #d0d0bf;border-top-left-radius:3px;box-sizing:border-box"></div>
<div style="left:749px;top:387px;width:292px;height:4px;border-top:1px solid #d0d0bf;border-right:1px solid #d0d0bf;border-top-right-radius:3px;box-sizing:border-box"></div>
<div style="left:453px;top:390px;width:588px;height:78px;border-left:1px solid #d0d0bf;border-right:1px solid #d0d0bf;border-bottom:1px solid #d0d0bf;border-bottom-left-radius:3px;border-bottom-right-radius:3px;box-sizing:border-box"></div>
<div style="left:462px;top:378px;font-size:14px;color:#0046d5;font-weight:normal;transform:scaleX(0.962);transform-origin:0 0;">Von der Modulzuordnung unabh&auml;ngige Attribute</div>
<div style="left:469px;top:406px;width:16px;height:16px;border:1px solid #1c5180;box-sizing:border-box;background:linear-gradient(135deg,#dcdcd5,#fff)"></div>
<div style="left:488px;top:406px;font-size:14px;color:#000;font-weight:normal;transform:scaleX(0.962);transform-origin:0 0;">Modulfarbe verwenden</div>
<div style="left:469px;top:434px;width:16px;height:16px;border:1px solid #1c5180;box-sizing:border-box;background:linear-gradient(135deg,#dcdcd5,#fff)"></div>
<div style="left:488px;top:434px;font-size:14px;color:#000;font-weight:normal;transform:scaleX(0.962);transform-origin:0 0;">kein automatisches Ausblenden bei Jacquard</div>
<div style="left:891px;top:400px;width:7px;height:4px;border-top:1px solid #d0d0bf;border-left:1px solid #d0d0bf;border-top-left-radius:3px;box-sizing:border-box"></div>
<div style="left:938px;top:400px;width:69px;height:4px;border-top:1px solid #d0d0bf;border-right:1px solid #d0d0bf;border-top-right-radius:3px;box-sizing:border-box"></div>
<div style="left:891px;top:403px;width:116px;height:49px;border-left:1px solid #d0d0bf;border-right:1px solid #d0d0bf;border-bottom:1px solid #d0d0bf;border-bottom-left-radius:3px;border-bottom-right-radius:3px;box-sizing:border-box"></div>
<div style="left:900px;top:392px;font-size:14px;color:#0046d5;font-weight:normal;transform:scaleX(0.962);transform-origin:0 0;">Offset</div>
<svg style="position:absolute;left:913px;top:419px" width="21" height="11" viewBox="0 0 21 11"><path d="M2 5.5 H19" stroke="#000" stroke-width="1.6"/><path d="M1 5.5 L6 1.5 L6 9.5 Z M20 5.5 L15 1.5 L15 9.5 Z" fill="#000"/></svg>
<div style="left:945px;top:412px;width:43px;height:24px;border:1px solid #7f9db9;box-sizing:border-box;background:#fbfbfb"></div>
<div style="left:948px;top:415px;font-size:14px;color:#aca899;font-weight:normal;transform:scaleX(0.962);transform-origin:0 0;">0</div>
<div style="left:453px;top:490px;width:7px;height:4px;border-top:1px solid #d0d0bf;border-left:1px solid #d0d0bf;border-top-left-radius:3px;box-sizing:border-box"></div>
<div style="left:564px;top:490px;width:477px;height:4px;border-top:1px solid #d0d0bf;border-right:1px solid #d0d0bf;border-top-right-radius:3px;box-sizing:border-box"></div>
<div style="left:453px;top:493px;width:588px;height:293px;border-left:1px solid #d0d0bf;border-right:1px solid #d0d0bf;border-bottom:1px solid #d0d0bf;border-bottom-left-radius:3px;border-bottom-right-radius:3px;box-sizing:border-box"></div>
<div style="left:462px;top:483px;font-size:14px;color:#0046d5;font-weight:normal;transform:scaleX(0.962);transform-origin:0 0;">Modulzuordnung</div>
<svg style="position:absolute;left:581px;top:504px" width="28" height="18" viewBox="0 0 28 18"><path d="M12 6 L8 2 L4 6" stroke="#000" stroke-width="1.2" fill="none"/><path d="M2 3 L2 8 L7 8 Z" fill="#000"/><path d="M13 3 H22 V7 H26 V12 H22 V16 H13 V12 H9 V7 H13 Z" fill="#000"/><rect x="14" y="4" width="7" height="2.5" fill="#888800"/><rect x="10" y="8" width="7" height="3" fill="#888800"/><rect x="18" y="8" width="7" height="3" fill="#888800"/><rect x="14" y="12.5" width="7" height="2.5" fill="#888800"/></svg>
<div style="left:469px;top:524px;width:260px;height:220px;border:1px solid #7f9db9;box-sizing:border-box;background:#fff"></div>
<div style="left:471px;top:526px;width:257px;height:16px;background:#316ac5"></div>
<div style="left:471px;top:526px;font-size:14px;color:#fff;font-weight:normal;transform:scaleX(0.935);transform-origin:0 0;">Struktur einfl&auml;chig</div>
<div style="left:471px;top:542px;font-size:14px;color:#000;font-weight:normal;transform:scaleX(0.935);transform-origin:0 0;">Struktur doppelfl&auml;chig</div>
<div style="left:471px;top:558px;font-size:14px;color:#000;font-weight:normal;transform:scaleX(0.935);transform-origin:0 0;">Jac-Ringel</div>
<div style="left:471px;top:574px;font-size:14px;color:#000;font-weight:normal;transform:scaleX(0.935);transform-origin:0 0;">Jac-K&ouml;per</div>
<div style="left:471px;top:590px;font-size:14px;color:#000;font-weight:normal;transform:scaleX(0.935);transform-origin:0 0;">Jac-Netz</div>
<div style="left:471px;top:606px;font-size:14px;color:#000;font-weight:normal;transform:scaleX(0.935);transform-origin:0 0;">Jac-Flottung</div>
<div style="left:471px;top:622px;font-size:14px;color:#000;font-weight:normal;transform:scaleX(0.935);transform-origin:0 0;">1x1-MG Struktur einfl&auml;chig</div>
<div style="left:471px;top:638px;font-size:14px;color:#000;font-weight:normal;transform:scaleX(0.935);transform-origin:0 0;">1x1-MG Struktur doppelfl&auml;chig</div>
<div style="left:471px;top:654px;font-size:14px;color:#000;font-weight:normal;transform:scaleX(0.935);transform-origin:0 0;">1x1-MG Jac-Ringel</div>
<div style="left:471px;top:670px;font-size:14px;color:#000;font-weight:normal;transform:scaleX(0.935);transform-origin:0 0;">1x1-MG Jac-K&ouml;per</div>
<div style="left:471px;top:686px;font-size:14px;color:#000;font-weight:normal;transform:scaleX(0.935);transform-origin:0 0;">1x1-MG Jac-Netz</div>
<div style="left:471px;top:702px;font-size:14px;color:#000;font-weight:normal;transform:scaleX(0.935);transform-origin:0 0;">1x1-MG Jac-Flottung</div>
<div style="left:471px;top:718px;font-size:14px;color:#000;font-weight:normal;transform:scaleX(0.935);transform-origin:0 0;">Pl&uuml;sch</div>
<div style="left:749px;top:503px;font-size:14px;color:#000;font-weight:normal;transform:scaleX(0.962);transform-origin:0 0;">Modul:</div>
<div style="left:747px;top:524px;width:280px;height:24px;border:1px solid #7f9db9;box-sizing:border-box;background:#fff"></div>
<div style="left:1006px;top:526px;width:19px;height:20px;background:linear-gradient(#d2defc,#b8cbf6);border:1px solid #c3d3fd;box-sizing:border-box;border-radius:2px"></div>
<svg style="position:absolute;left:1010px;top:532px" width="11" height="8"><path d="M1.5 1.5 L5.5 5.5 L9.5 1.5" stroke="#4d6185" stroke-width="2" fill="none"/></svg>
<div style="left:750px;top:528px;font-size:14px;color:#000;font-weight:normal;transform:scaleX(0.962);transform-origin:0 0;">(L)2x2 RL-Rippe</div>
<div style="left:749px;top:564px;width:160px;height:140px;border-top:1px solid #aca899;border-left:1px solid #aca899;border-right:1px solid #fff;border-bottom:1px solid #fff;box-sizing:border-box"></div>
<div style="left:765px;top:570px;width:128px;height:129px;background:#c0c0c0"></div>
<svg style="position:absolute;left:765px;top:570px" width="128" height="129" viewBox="765 570 128 129"><path d="M773.5 630 L885 630 L885 655 L773.5 655 Z" fill="#5f5fec" stroke="#101038" stroke-width="1.4"/><path d="M781.7 655.5 L783.0 649.5 Q786.5 645.5 790.0 649.5 L791.3 655.5 Z" fill="#c0c0c0" stroke="#101038" stroke-width="1.3"/><path d="M809.9000000000001 655.5 L811.2 649.5 Q814.7 645.5 818.2 649.5 L819.5 655.5 Z" fill="#c0c0c0" stroke="#101038" stroke-width="1.3"/><path d="M838.1 655.5 L839.4 649.5 Q842.9 645.5 846.4 649.5 L847.6999999999999 655.5 Z" fill="#c0c0c0" stroke="#101038" stroke-width="1.3"/><path d="M866.3000000000001 655.5 L867.6 649.5 Q871.1 645.5 874.6 649.5 L875.9 655.5 Z" fill="#c0c0c0" stroke="#101038" stroke-width="1.3"/><path d="M800.4 632.5 L803.6 637.5 L800.4 642.5 L797.1999999999999 637.5 Z" fill="#c0c0c0" stroke="#101038" stroke-width="1"/><path d="M856.8 632.5 L860.0 637.5 L856.8 642.5 L853.5999999999999 637.5 Z" fill="#c0c0c0" stroke="#101038" stroke-width="1"/><path d="M778.5 636 L787.5 652 M789.5 636 L792.5 650" stroke="#101038" stroke-width="1" fill="none"/><path d="M801.7 651 Q814.7 630 828.7 651 M807.7 655 Q814.7 638 822.7 655" stroke="#101038" stroke-width="1" fill="none"/><path d="M829.9 651 Q842.9 630 856.9 651 M835.9 655 Q842.9 638 850.9 655" stroke="#101038" stroke-width="1" fill="none"/><path d="M863.1 636 L872.1 652 M874.1 636 L877.1 650" stroke="#101038" stroke-width="1" fill="none"/><path d="M773.3 625.6 A13.2 12.3 0 1 1 799.7 625.6 A13.2 12.3 0 1 1 773.3 625.6 Z" fill="#5f5fec" stroke="#101038" stroke-width="1.4"/><path d="M786.5 635 C782.0 632 780.3 628 780.5 625.5 C780.7 619.8 792.3 619.8 792.5 625.5 C792.7 628 791.0 632 786.5 635 Z" fill="#c0c0c0" stroke="#101038" stroke-width="1.4"/><path d="M801.5 625.6 A13.2 12.3 0 1 1 827.9000000000001 625.6 A13.2 12.3 0 1 1 801.5 625.6 Z" fill="#5f5fec" stroke="#101038" stroke-width="1.4"/><path d="M814.7 635 C810.2 632 808.5 628 808.7 625.5 C808.9000000000001 619.8 820.5 619.8 820.7 625.5 C820.9000000000001 628 819.2 632 814.7 635 Z" fill="#c0c0c0" stroke="#101038" stroke-width="1.4"/><path d="M829.6999999999999 625.6 A13.2 12.3 0 1 1 856.1 625.6 A13.2 12.3 0 1 1 829.6999999999999 625.6 Z" fill="#5f5fec" stroke="#101038" stroke-width="1.4"/><path d="M842.9 635 C838.4 632 836.6999999999999 628 836.9 625.5 C837.1 619.8 848.6999999999999 619.8 848.9 625.5 C849.1 628 847.4 632 842.9 635 Z" fill="#c0c0c0" stroke="#101038" stroke-width="1.4"/><path d="M857.9 625.6 A13.2 12.3 0 1 1 884.3000000000001 625.6 A13.2 12.3 0 1 1 857.9 625.6 Z" fill="#5f5fec" stroke="#101038" stroke-width="1.4"/><path d="M871.1 635 C866.6 632 864.9 628 865.1 625.5 C865.3000000000001 619.8 876.9 619.8 877.1 625.5 C877.3000000000001 628 875.6 632 871.1 635 Z" fill="#c0c0c0" stroke="#101038" stroke-width="1.4"/></svg>
<div style="left:765px;top:655px;width:128px;height:44px;background:#c0c0c0"></div>
<div style="left:469px;top:759px;width:16px;height:16px;border:1px solid #1c5180;box-sizing:border-box;background:linear-gradient(135deg,#dcdcd5,#fff)"></div>
<div style="left:488px;top:758px;font-size:14px;color:#000;font-weight:normal;transform:scaleX(0.935);transform-origin:0 0;">gilt f&uuml;r alle Strickarten</div>
<div style="left:210px;top:897px;width:268px;height:26px;border:1px solid #003c74;border-radius:3px;box-sizing:border-box;background:linear-gradient(#ffffff 0%,#f6f6f2 40%,#eeede6 85%,#dcd6c8 100%)"></div>
<div style="left:210.0px;top:902px;width:268px;text-align:center;font-size:14px;color:#000;font-weight:normal;transform:scaleX(0.962);transform-origin:50% 0;">Formteile neu ermitteln</div>
<div style="left:506px;top:897px;width:268px;height:26px;border:1px solid #c9c7ba;border-radius:3px;box-sizing:border-box;background:#f5f4ea"></div>
<div style="left:506.0px;top:902px;width:268px;text-align:center;font-size:14px;color:#aca899;font-weight:normal;transform:scaleX(0.962);transform-origin:50% 0;">In Formansicht &uuml;bernehmen</div>
<div style="left:802px;top:897px;width:268px;height:26px;border:1px solid #003c74;border-radius:3px;box-sizing:border-box;background:linear-gradient(#ffffff 0%,#f6f6f2 40%,#eeede6 85%,#dcd6c8 100%)"></div>
<div style="left:802.0px;top:902px;width:268px;text-align:center;font-size:14px;color:#000;font-weight:normal;transform:scaleX(0.962);transform-origin:50% 0;">Formansicht initialisieren</div>
</body></html>
